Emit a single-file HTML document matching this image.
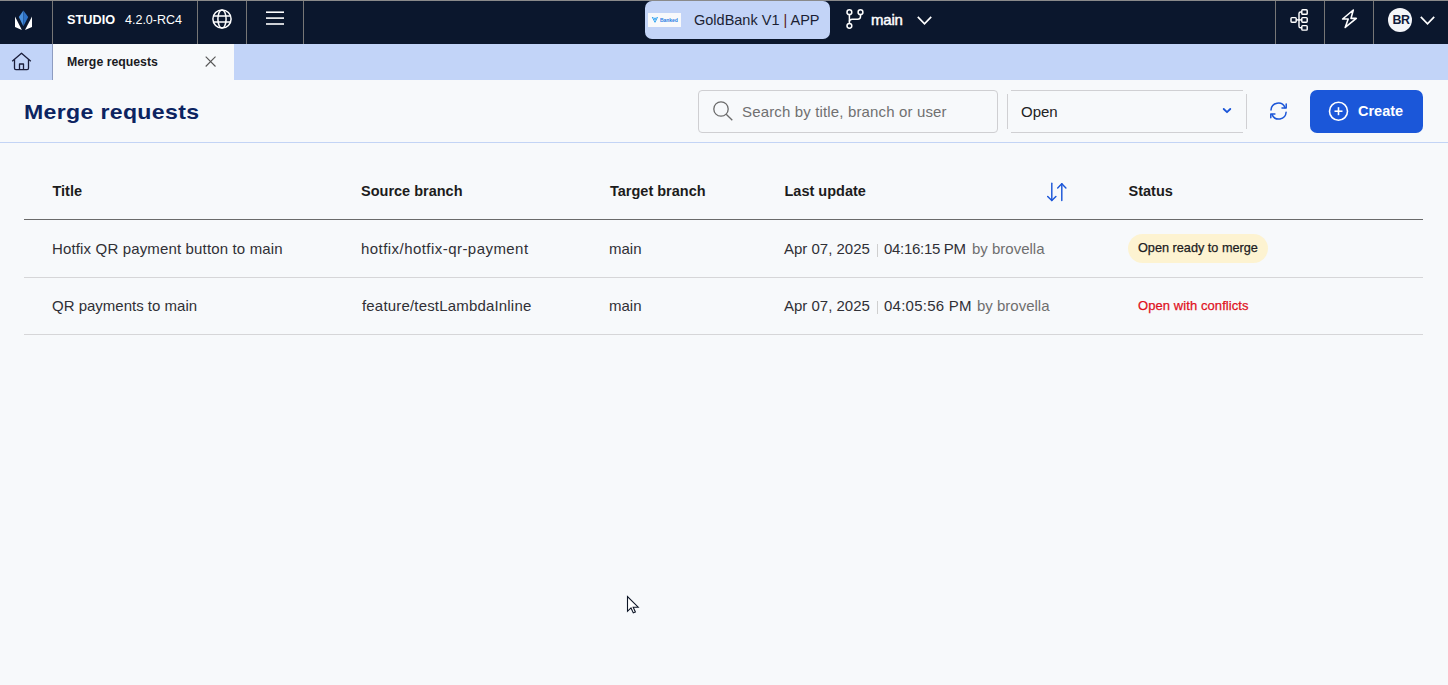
<!DOCTYPE html>
<html><head><meta charset="utf-8">
<style>
*{margin:0;padding:0;box-sizing:border-box}
html,body{width:1448px;height:685px;overflow:hidden;background:#f7f9fb;font-family:"Liberation Sans",sans-serif}
body{position:relative}
.a{position:absolute;white-space:nowrap;line-height:normal}
svg{position:absolute;overflow:visible}
.vsep{position:absolute;top:1px;width:1px;height:43px;background:#767676}
.hdr{font-weight:bold;font-size:14.5px;color:#1c1c1c}
.cell{font-size:15px;color:#303036}
.by{color:#6f6f6f}
.hl{position:absolute;height:1px}
</style></head><body>
<!-- ===== NAVBAR ===== -->
<div class="a" style="left:0;top:0;width:1448px;height:1px;background:#8a8a8a"></div>
<div class="a" style="left:0;top:1px;width:1448px;height:43px;background:#0b172d"></div>
<div class="vsep" style="left:52px"></div>
<div class="vsep" style="left:197px"></div>
<div class="vsep" style="left:246px"></div>
<div class="vsep" style="left:303px"></div>
<div class="vsep" style="left:1275px"></div>
<div class="vsep" style="left:1324px"></div>
<div class="vsep" style="left:1373px"></div>

<!-- logo -->
<svg style="left:0;top:0" width="52" height="44" viewBox="0 0 52 44">
  <polygon points="23.4,10.5 18.8,17 23.4,26.2" fill="#4a90dc"/>
  <polygon points="23.4,10.5 28.2,17 23.4,26.2" fill="#2e72c6"/>
  <polygon points="15,16.6 21.9,30 15,27" fill="#ffffff"/>
  <polygon points="32,16.6 25,30 32,27" fill="#ffffff"/>
</svg>

<div class="a" id="studio" style="left:67px;top:13px;font-size:12.7px;font-weight:bold;color:#fff;letter-spacing:0.05px">STUDIO</div>
<div class="a" id="ver" style="left:125px;top:13px;font-size:12.5px;color:#fff">4.2.0-RC4</div>

<!-- globe -->
<svg style="left:212px;top:9px" width="20" height="20" viewBox="0 0 20 20" fill="none" stroke="#fff" stroke-width="1.5">
  <circle cx="10" cy="10" r="9.1"/>
  <ellipse cx="10" cy="10" rx="4.1" ry="9.1"/>
  <line x1="1.5" y1="7" x2="18.5" y2="7"/>
  <line x1="1.5" y1="13" x2="18.5" y2="13"/>
</svg>
<!-- hamburger -->
<svg style="left:266px;top:11px" width="18" height="14" viewBox="0 0 18 14" stroke="#fff" stroke-width="1.6">
  <line x1="0" y1="1.2" x2="18" y2="1.2"/>
  <line x1="0" y1="7.1" x2="18" y2="7.1"/>
  <line x1="0" y1="13" x2="18" y2="13"/>
</svg>

<!-- project pill -->
<div class="a" style="left:645px;top:1px;width:185px;height:38px;background:#c3d4f7;border-radius:7px"></div>
<div class="a" style="left:648px;top:13px;width:33px;height:14px;background:#f8f9fb"></div>
<svg style="left:648px;top:13px" width="33" height="14" viewBox="0 0 33 14">
  <path d="M4.2 4 L7 9.3 L9.6 4 M5.8 4.4 L7 6.8 L8.2 4.4" fill="none" stroke="#1d9bef" stroke-width="0.9"/>
</svg>
<div class="a" style="left:659.5px;top:16px;font-size:6.2px;font-weight:bold;color:#2f80e4;letter-spacing:-0.1px;transform:scaleX(0.82);transform-origin:0 0">Banked</div>
<div class="a" id="gold" style="left:694px;top:12px;font-size:14.5px;color:#1b1f33">GoldBank V1 <span style="color:#5a1a24">|</span> APP</div>

<!-- branch icon -->
<svg style="left:846px;top:9px" width="18" height="20" viewBox="0 0 18 20" fill="none" stroke="#fff" stroke-width="1.5">
  <circle cx="3.4" cy="3.2" r="2.4"/>
  <circle cx="14.5" cy="3.2" r="2.4"/>
  <circle cx="3.4" cy="16.8" r="2.4"/>
  <line x1="3.4" y1="5.6" x2="3.4" y2="14.4"/>
  <path d="M14.5 5.6 V7.5 Q14.5 10.2 11.8 10.2 H6.2 Q3.4 10.2 3.4 12.5"/>
</svg>
<div class="a" id="mainb" style="left:871px;top:11px;font-size:15px;color:#fff;-webkit-text-stroke:0.45px #fff;letter-spacing:-0.2px">main</div>
<svg style="left:917px;top:16px" width="15" height="9" viewBox="0 0 15 9" fill="none" stroke="#fff" stroke-width="1.7">
  <polyline points="0.8,0.8 7.5,7.8 14.2,0.8"/>
</svg>

<!-- tree icon -->
<svg style="left:1289px;top:8px" width="21" height="24" viewBox="0 0 21 24" fill="none" stroke="#fff" stroke-width="1.45">
  <rect x="2" y="9.6" width="5.2" height="4.6" rx="0.9"/>
  <rect x="12.8" y="1.8" width="5.4" height="4.5" rx="0.9"/>
  <rect x="12.8" y="9.6" width="5.4" height="4.6" rx="0.9"/>
  <rect x="12.8" y="17.6" width="5.4" height="4.5" rx="0.9"/>
  <path d="M12.8 4 H11.6 Q10 4 10 5.6 V18.2 Q10 19.8 11.6 19.8 H12.8"/>
  <line x1="7.2" y1="11.9" x2="12.8" y2="11.9"/>
</svg>
<!-- bolt -->
<svg style="left:1340px;top:8px" width="19" height="22" viewBox="0 0 19 22" fill="none" stroke="#fff" stroke-width="1.6" stroke-linejoin="round">
  <path d="M13.3 2 L2.6 11 L8.2 11 L5.2 19.4 L16.3 10.4 L11 10.4 Z"/>
</svg>
<!-- avatar -->
<div class="a" style="left:1388px;top:8px;width:24px;height:24px;border-radius:50%;background:#f4f5f9"></div>
<div class="a" id="br" style="left:1392.5px;top:13px;font-size:12.4px;font-weight:bold;color:#0f1a3a;letter-spacing:-0.4px">BR</div>
<svg style="left:1420px;top:16px" width="15" height="9" viewBox="0 0 15 9" fill="none" stroke="#fff" stroke-width="1.7">
  <polyline points="0.8,0.8 7.5,7.8 14.2,0.8"/>
</svg>

<!-- ===== TAB BAR ===== -->
<div class="a" style="left:0;top:44px;width:1448px;height:36px;background:#c2d4f8"></div>
<div class="a" style="left:52px;top:44px;width:1px;height:36px;background:#8d9cc0"></div>
<div class="a" style="left:53px;top:44px;width:181px;height:36px;background:#f7f9fb"></div>
<svg style="left:11px;top:52px" width="21" height="19" viewBox="0 0 21 19" fill="none" stroke="#1a1d3a" stroke-width="1.3" stroke-linejoin="round">
  <path d="M1.2 9.2 L10.5 1.2 L19.8 9.2"/>
  <path d="M3.5 7.3 V16.2 Q3.5 17.6 4.9 17.6 H16.1 Q17.5 17.6 17.5 16.2 V7.3"/>
  <path d="M8.5 17.6 V12 H12.5 V17.6"/>
</svg>
<div class="a" id="tabt" style="left:67px;top:55px;font-size:12.3px;font-weight:bold;color:#1b1b1f">Merge requests</div>
<svg style="left:205px;top:56px" width="12" height="12" viewBox="0 0 12 12" stroke="#555" stroke-width="1.1">
  <line x1="0.7" y1="0.7" x2="10.5" y2="10.5"/>
  <line x1="10.5" y1="0.7" x2="0.7" y2="10.5"/>
</svg>

<!-- ===== PAGE HEADER ===== -->
<div class="a" id="ptitle" style="left:23.5px;top:99.5px;font-size:21px;font-weight:bold;color:#0c2461;letter-spacing:0.3px;transform:scaleX(1.1);transform-origin:0 0">Merge requests</div>

<!-- search -->
<div class="a" style="left:698px;top:90px;width:300px;height:43px;border:1px solid #cfcfd2;border-radius:4px"></div>
<svg style="left:712px;top:100px" width="22" height="22" viewBox="0 0 22 22" fill="none" stroke="#6b6b6b" stroke-width="1.3">
  <circle cx="9" cy="9" r="7.2"/>
  <line x1="14.2" y1="14.2" x2="20.3" y2="20.3"/>
</svg>
<div class="a" id="ph" style="left:742px;top:103px;font-size:15px;color:#707070;letter-spacing:0.15px">Search by title, branch or user</div>

<!-- select -->
<div class="hl" style="left:1011px;top:90px;width:232px;background:#d0d0d3"></div>
<div class="hl" style="left:1011px;top:132px;width:232px;background:#d0d0d3"></div>
<div class="a" style="left:1007px;top:94px;width:1px;height:35px;background:#d0d0d3"></div>
<div class="a" style="left:1246px;top:94px;width:1px;height:35px;background:#d0d0d3"></div>
<div class="a" id="open" style="left:1021px;top:103px;font-size:15px;color:#222">Open</div>
<svg style="left:1222px;top:107px" width="10" height="7" viewBox="0 0 10 7" fill="none" stroke="#1b56d8" stroke-width="1.8" stroke-linecap="round" stroke-linejoin="round">
  <polyline points="1.7,2 5,5.2 8.3,2"/>
</svg>

<!-- refresh -->
<svg style="left:1268px;top:101px" width="21" height="20" viewBox="0 0 21 20" fill="none" stroke="#1b56d8" stroke-width="1.5" stroke-linecap="round" stroke-linejoin="round">
  <path d="M3 9 A7.3 7.3 0 0 1 17 6.6"/>
  <polyline points="14,7 18.2,7 18.2,3.1"/>
  <path d="M18.1 11.3 A7.3 7.3 0 0 1 4.1 13.6"/>
  <polyline points="6.9,13 2.8,13 2.8,16.8"/>
</svg>
<!-- create -->
<div class="a" style="left:1310px;top:90px;width:113px;height:43px;background:#1b57d9;border-radius:7px"></div>
<svg style="left:1328px;top:101px" width="21" height="21" viewBox="0 0 21 21" fill="none" stroke="#fff" stroke-width="1.6">
  <circle cx="10.5" cy="10.2" r="9"/>
  <line x1="10.5" y1="6.2" x2="10.5" y2="14.2"/>
  <line x1="6.5" y1="10.2" x2="14.5" y2="10.2"/>
</svg>
<div class="a" id="create" style="left:1358px;top:103px;font-size:14.5px;font-weight:bold;color:#fff">Create</div>

<div class="hl" style="left:0;top:142px;width:1448px;background:#c3d4f5"></div>

<!-- ===== TABLE ===== -->
<div class="a hdr" style="left:52.5px;top:183px">Title</div>
<div class="a hdr" style="left:361px;top:183px">Source branch</div>
<div class="a hdr" style="left:610px;top:183px">Target branch</div>
<div class="a hdr" style="left:784.5px;top:183px">Last update</div>
<svg style="left:1046px;top:182px" width="22" height="21" viewBox="0 0 22 21" fill="none" stroke="#1b56d8" stroke-width="1.45" stroke-linecap="round" stroke-linejoin="round">
  <line x1="5.8" y1="1.3" x2="5.8" y2="18.4"/>
  <polyline points="1.7,14.5 5.8,18.6 9.9,14.5"/>
  <line x1="15.8" y1="1.8" x2="15.8" y2="18.6"/>
  <polyline points="11.7,5.9 15.8,1.8 19.9,5.9"/>
</svg>
<div class="a hdr" style="left:1128.5px;top:183px">Status</div>
<div class="hl" style="left:24px;top:219px;width:1399px;background:#6a6a6a"></div>

<div class="a cell" id="r1t" style="left:52px;top:240px;letter-spacing:0.15px">Hotfix QR payment button to main</div>
<div class="a cell" id="r1s" style="left:361px;top:240px;letter-spacing:0.45px">hotfix/hotfix-qr-payment</div>
<div class="a cell" style="left:609px;top:240px">main</div>
<div class="a cell" style="left:784px;top:240px">Apr 07, 2025</div>
<div class="a" style="left:877px;top:244px;width:1px;height:13px;background:#cfcfcf"></div>
<div class="a cell" style="left:884px;top:240px;letter-spacing:-0.3px">04:16:15 PM</div>
<div class="a cell by" style="left:972px;top:240px">by brovella</div>
<div class="a" style="left:1128px;top:234px;width:140px;height:29px;border-radius:15px;background:#fdf3d1"></div>
<div class="a" id="pill" style="left:1138px;top:241px;font-size:12.7px;color:#1c1c22;-webkit-text-stroke:0.25px #1c1c22">Open ready to merge</div>
<div class="hl" style="left:24px;top:277px;width:1399px;background:#d6d6d8"></div>

<div class="a cell" style="left:52px;top:297px">QR payments to main</div>
<div class="a cell" id="r2s" style="left:362px;top:297px;letter-spacing:0.18px">feature/testLambdaInline</div>
<div class="a cell" style="left:609px;top:297px">main</div>
<div class="a cell" style="left:784px;top:297px">Apr 07, 2025</div>
<div class="a" style="left:877px;top:301px;width:1px;height:13px;background:#cfcfcf"></div>
<div class="a cell" style="left:884px;top:297px;letter-spacing:0.25px">04:05:56 PM</div>
<div class="a cell by" style="left:977px;top:297px">by brovella</div>
<div class="a" id="conf" style="left:1138px;top:298px;font-size:13px;color:#e0111d;-webkit-text-stroke:0.25px #e0111d;letter-spacing:0.08px">Open with conflicts</div>
<div class="hl" style="left:24px;top:334px;width:1399px;background:#d6d6d8"></div>

<!-- cursor -->
<svg style="left:626px;top:595px" width="14" height="20" viewBox="0 0 14 20" fill="#fff" stroke="#0d1526" stroke-width="1.1" stroke-linejoin="miter">
  <path d="M1.5 1.5 L1.5 16.3 L5 12.9 L7.3 17.9 L9.4 17 L7.2 12.2 L12.2 12.2 Z"/>
</svg>
</body></html>
